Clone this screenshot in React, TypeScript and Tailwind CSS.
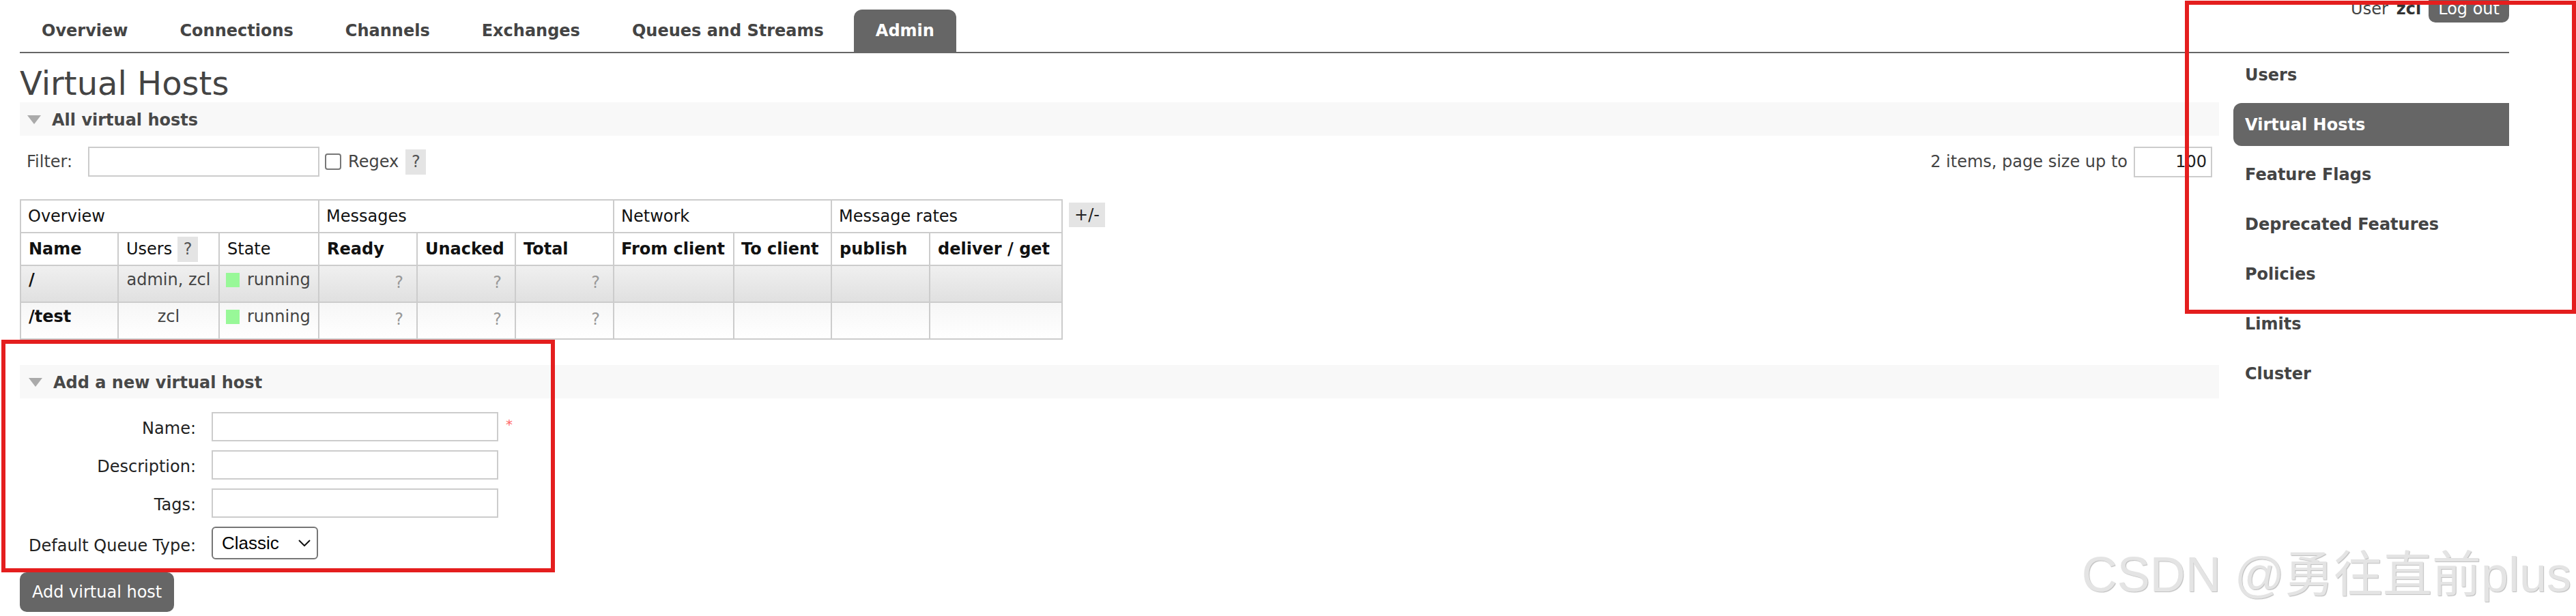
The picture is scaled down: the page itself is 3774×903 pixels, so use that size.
import clsx from "clsx";

const tabs = ["Overview", "Connections", "Channels", "Exchanges", "Queues and Streams", "Admin"];
const menu = ["Users", "Virtual Hosts", "Feature Flags", "Deprecated Features", "Policies", "Limits", "Cluster"];

const vhosts = [
  { name: "/", users: "admin, zcl", alt: true },
  { name: "/test", users: "zcl", alt: false },
];

function Toggle() {
  return (
    <svg width="20" height="13" viewBox="0 0 20 13" className="shrink-0">
      <polygon points="0,0 20,0 10,13" fill="#aaa" />
    </svg>
  );
}

function Help({ className }: { className?: string }) {
  return (
    <span className={clsx("inline-flex h-[37px] w-[30px] items-center justify-center bg-[#e4e4e4] text-[#555]", className)}>?</span>
  );
}

export default function App() {
  return (
    <div className="relative h-[903px] w-[3774px] overflow-hidden bg-white font-['DejaVu_Sans',Verdana,sans-serif] text-[24px] leading-[28px] text-[#444]">
      <div className="pl-[29px] pr-[98px]">
        <header className="flex h-[78px] items-end justify-between border-b-2 border-[#666]">
          <ul className="flex gap-[12px]">
            {tabs.map((tab) => (
              <li
                key={tab}
                className={clsx(
                  "flex h-[62px] items-center rounded-t-[12px] px-[32px] font-bold",
                  tab === "Admin" ? "bg-[#666] text-white" : "text-[#444]"
                )}
              >
                {tab}
              </li>
            ))}
          </ul>
          <div className="-mt-[8px] flex items-center self-start">
            <span>User</span>
            <b className="ml-[12px] text-[#333]">zcl</b>
            <button className="ml-[11px] h-[41px] rounded-[10px] bg-[#666] px-[14px] text-[24px] text-white">Log out</button>
          </div>
        </header>

        <div className="flex">
          <main className="w-[3222px]">
            <h1 className="mt-[16px] text-[48px] leading-[56px] text-[#444]">Virtual Hosts</h1>

            <div className="flex h-[49px] items-center gap-[16px] bg-[#f8f8f8] pl-[11px] pt-[2px] font-bold text-[#484848]">
              <Toggle />
              <span>All virtual hosts</span>
            </div>

            <div className="mt-[13px] flex h-[50px] items-center justify-between px-[10px]">
              <div className="flex items-center">
                <span>Filter:</span>
                <input className="ml-[23px] h-[44px] w-[339px] border-2 border-[#ccc] bg-white" />
                <input type="checkbox" className="ml-[8px] h-[24px] w-[24px] appearance-none rounded-[4px] border-2 border-[#777] bg-white" />
                <span className="ml-[10px]">Regex</span>
                <Help className="ml-[10px]" />
              </div>
              <div className="flex items-center">
                <span>2 items, page size up to</span>
                <input
                  defaultValue="100"
                  className="ml-[9px] h-[45px] w-[115px] border-2 border-[#ccc] bg-white pr-[6px] text-right text-[#222]"
                />
              </div>
            </div>

            <div className="mt-[30px] flex items-start gap-[9px]">
              <table className="w-[1528px] table-fixed border-collapse border-2 border-[#ccc]">
                <colgroup>
                  <col className="w-[143px]" />
                  <col className="w-[148px]" />
                  <col className="w-[146px]" />
                  <col className="w-[144px]" />
                  <col className="w-[144px]" />
                  <col className="w-[144px]" />
                  <col className="w-[176px]" />
                  <col className="w-[143px]" />
                  <col className="w-[144px]" />
                  <col className="w-[194px]" />
                </colgroup>
                <thead>
                  <tr className="h-[48px] text-left font-normal text-[#111]">
                    <th colSpan={3} className="border-2 border-[#ccc] px-[10px] font-normal">Overview</th>
                    <th colSpan={3} className="border-2 border-[#ccc] px-[10px] font-normal">Messages</th>
                    <th colSpan={2} className="border-2 border-[#ccc] px-[10px] font-normal">Network</th>
                    <th colSpan={2} className="border-2 border-[#ccc] px-[10px] font-normal">Message rates</th>
                  </tr>
                  <tr className="h-[48px] text-left text-[#111]">
                    <th className="border-2 border-[#ccc] px-[11px]">Name</th>
                    <th className="border-2 border-[#ccc] px-[11px] font-normal">
                      <div className="flex items-center gap-[8px]">
                        <span>Users</span>
                        <Help />
                      </div>
                    </th>
                    <th className="border-2 border-[#ccc] px-[11px] font-normal">State</th>
                    <th className="border-2 border-[#ccc] px-[11px]">Ready</th>
                    <th className="border-2 border-[#ccc] px-[11px]">Unacked</th>
                    <th className="border-2 border-[#ccc] px-[11px]">Total</th>
                    <th className="whitespace-nowrap border-2 border-[#ccc] px-[10px]">From client</th>
                    <th className="whitespace-nowrap border-2 border-[#ccc] px-[10px]">To client</th>
                    <th className="border-2 border-[#ccc] px-[11px]">publish</th>
                    <th className="whitespace-nowrap border-2 border-[#ccc] px-[11px]">deliver / get</th>
                  </tr>
                </thead>
                <tbody>
                  {vhosts.map((vhost) => (
                    <tr
                      key={vhost.name}
                      className={clsx(
                        "h-[54px] bg-linear-to-b",
                        vhost.alt ? "from-[#f0f0f0] to-[#e0e0e0]" : "from-[#f6f6f6] to-[#ffffff]"
                      )}
                    >
                      <td className="border-2 border-[#ccc] px-[11px] pt-[6px] align-top font-bold text-[#111]">{vhost.name}</td>
                      <td className="border-2 border-[#ccc] px-[8px] pt-[6px] text-center align-top whitespace-nowrap">{vhost.users}</td>
                      <td className="border-2 border-[#ccc] px-[9px] pt-[6px] align-top">
                        <div className="flex items-center gap-[11px]">
                          <span className="h-[21px] w-[20px] bg-[#98f898]" />
                          <span>running</span>
                        </div>
                      </td>
                      {[0, 1, 2].map((i) => (
                        <td key={i} className="border-2 border-[#ccc] pr-[19px] pt-[10px] text-right align-top text-[#999]">?</td>
                      ))}
                      {[0, 1, 2, 3].map((i) => (
                        <td key={i} className="border-2 border-[#ccc]" />
                      ))}
                    </tr>
                  ))}
                </tbody>
              </table>
              <span className="mt-[5px] flex h-[36px] items-center bg-[#e4e4e4] px-[8px] text-[#222]">+/-</span>
            </div>

            <div className="mt-[37px] flex h-[49px] items-center gap-[16px] bg-[#f8f8f8] pl-[13px] pt-[2px] font-bold text-[#484848]">
              <Toggle />
              <span>Add a new virtual host</span>
            </div>

            <div className="mt-[20px] grid grid-cols-[258px_auto] items-end gap-x-[23px] gap-y-[13px] text-[#222]">
              <label className="pb-[5px] text-right">Name:</label>
              <div className="flex items-start">
                <input className="h-[43px] w-[420px] border-2 border-[#ccc] bg-white" />
                <span className="ml-[11px] mt-[4px] text-[20px] text-[#f66]">*</span>
              </div>
              <label className="pb-[5px] text-right">Description:</label>
              <input className="h-[43px] w-[420px] border-2 border-[#ccc] bg-white" />
              <label className="pb-[5px] text-right">Tags:</label>
              <input className="h-[43px] w-[420px] border-2 border-[#ccc] bg-white" />
              <label className="pb-[6px] text-right">Default Queue Type:</label>
              <div className="relative h-[48px] w-[156px]">
                <select className="h-full w-full appearance-none rounded-[6px] border-2 border-[#767676] bg-white pl-[13px] font-['Liberation_Sans',Arial,sans-serif] text-[26px] text-black">
                  <option>Classic</option>
                </select>
                <svg width="18" height="10" viewBox="0 0 18 10" className="pointer-events-none absolute right-[11px] top-[19px]">
                  <polyline points="1,1 9,9 17,1" fill="none" stroke="#111" strokeWidth="2" />
                </svg>
              </div>
            </div>

            <button className="mt-[19px] h-[58px] rounded-[10px] bg-[#666] px-[18px] text-[24px] text-white">Add virtual host</button>
          </main>

          <nav className="ml-[21px] w-[404px]">
            <ul className="flex flex-col gap-[10px]">
              {menu.map((item) => (
                <li
                  key={item}
                  className={clsx(
                    "flex h-[63px] items-center rounded-l-[12px] pl-[17px] font-bold",
                    item === "Virtual Hosts" ? "bg-[#666] text-white" : "text-[#444]"
                  )}
                >
                  {item}
                </li>
              ))}
            </ul>
          </nav>
        </div>
      </div>

      <div className="pointer-events-none absolute right-[7px] top-[806px] font-['Liberation_Sans','Noto_Sans_CJK_SC',sans-serif] text-[72px] leading-none text-[#e4e4e4] [text-shadow:1px_1px_1px_#bdbdbd]">
        CSDN @勇往直前plus
      </div>

      <div className="pointer-events-none absolute left-[3201px] top-[1px] h-[459px] w-[573px] border-[6px] border-[#e41e1e]" />
      <div className="pointer-events-none absolute left-[2px] top-[498px] h-[341px] w-[811px] border-[6px] border-[#e41e1e]" />
    </div>
  );
}
